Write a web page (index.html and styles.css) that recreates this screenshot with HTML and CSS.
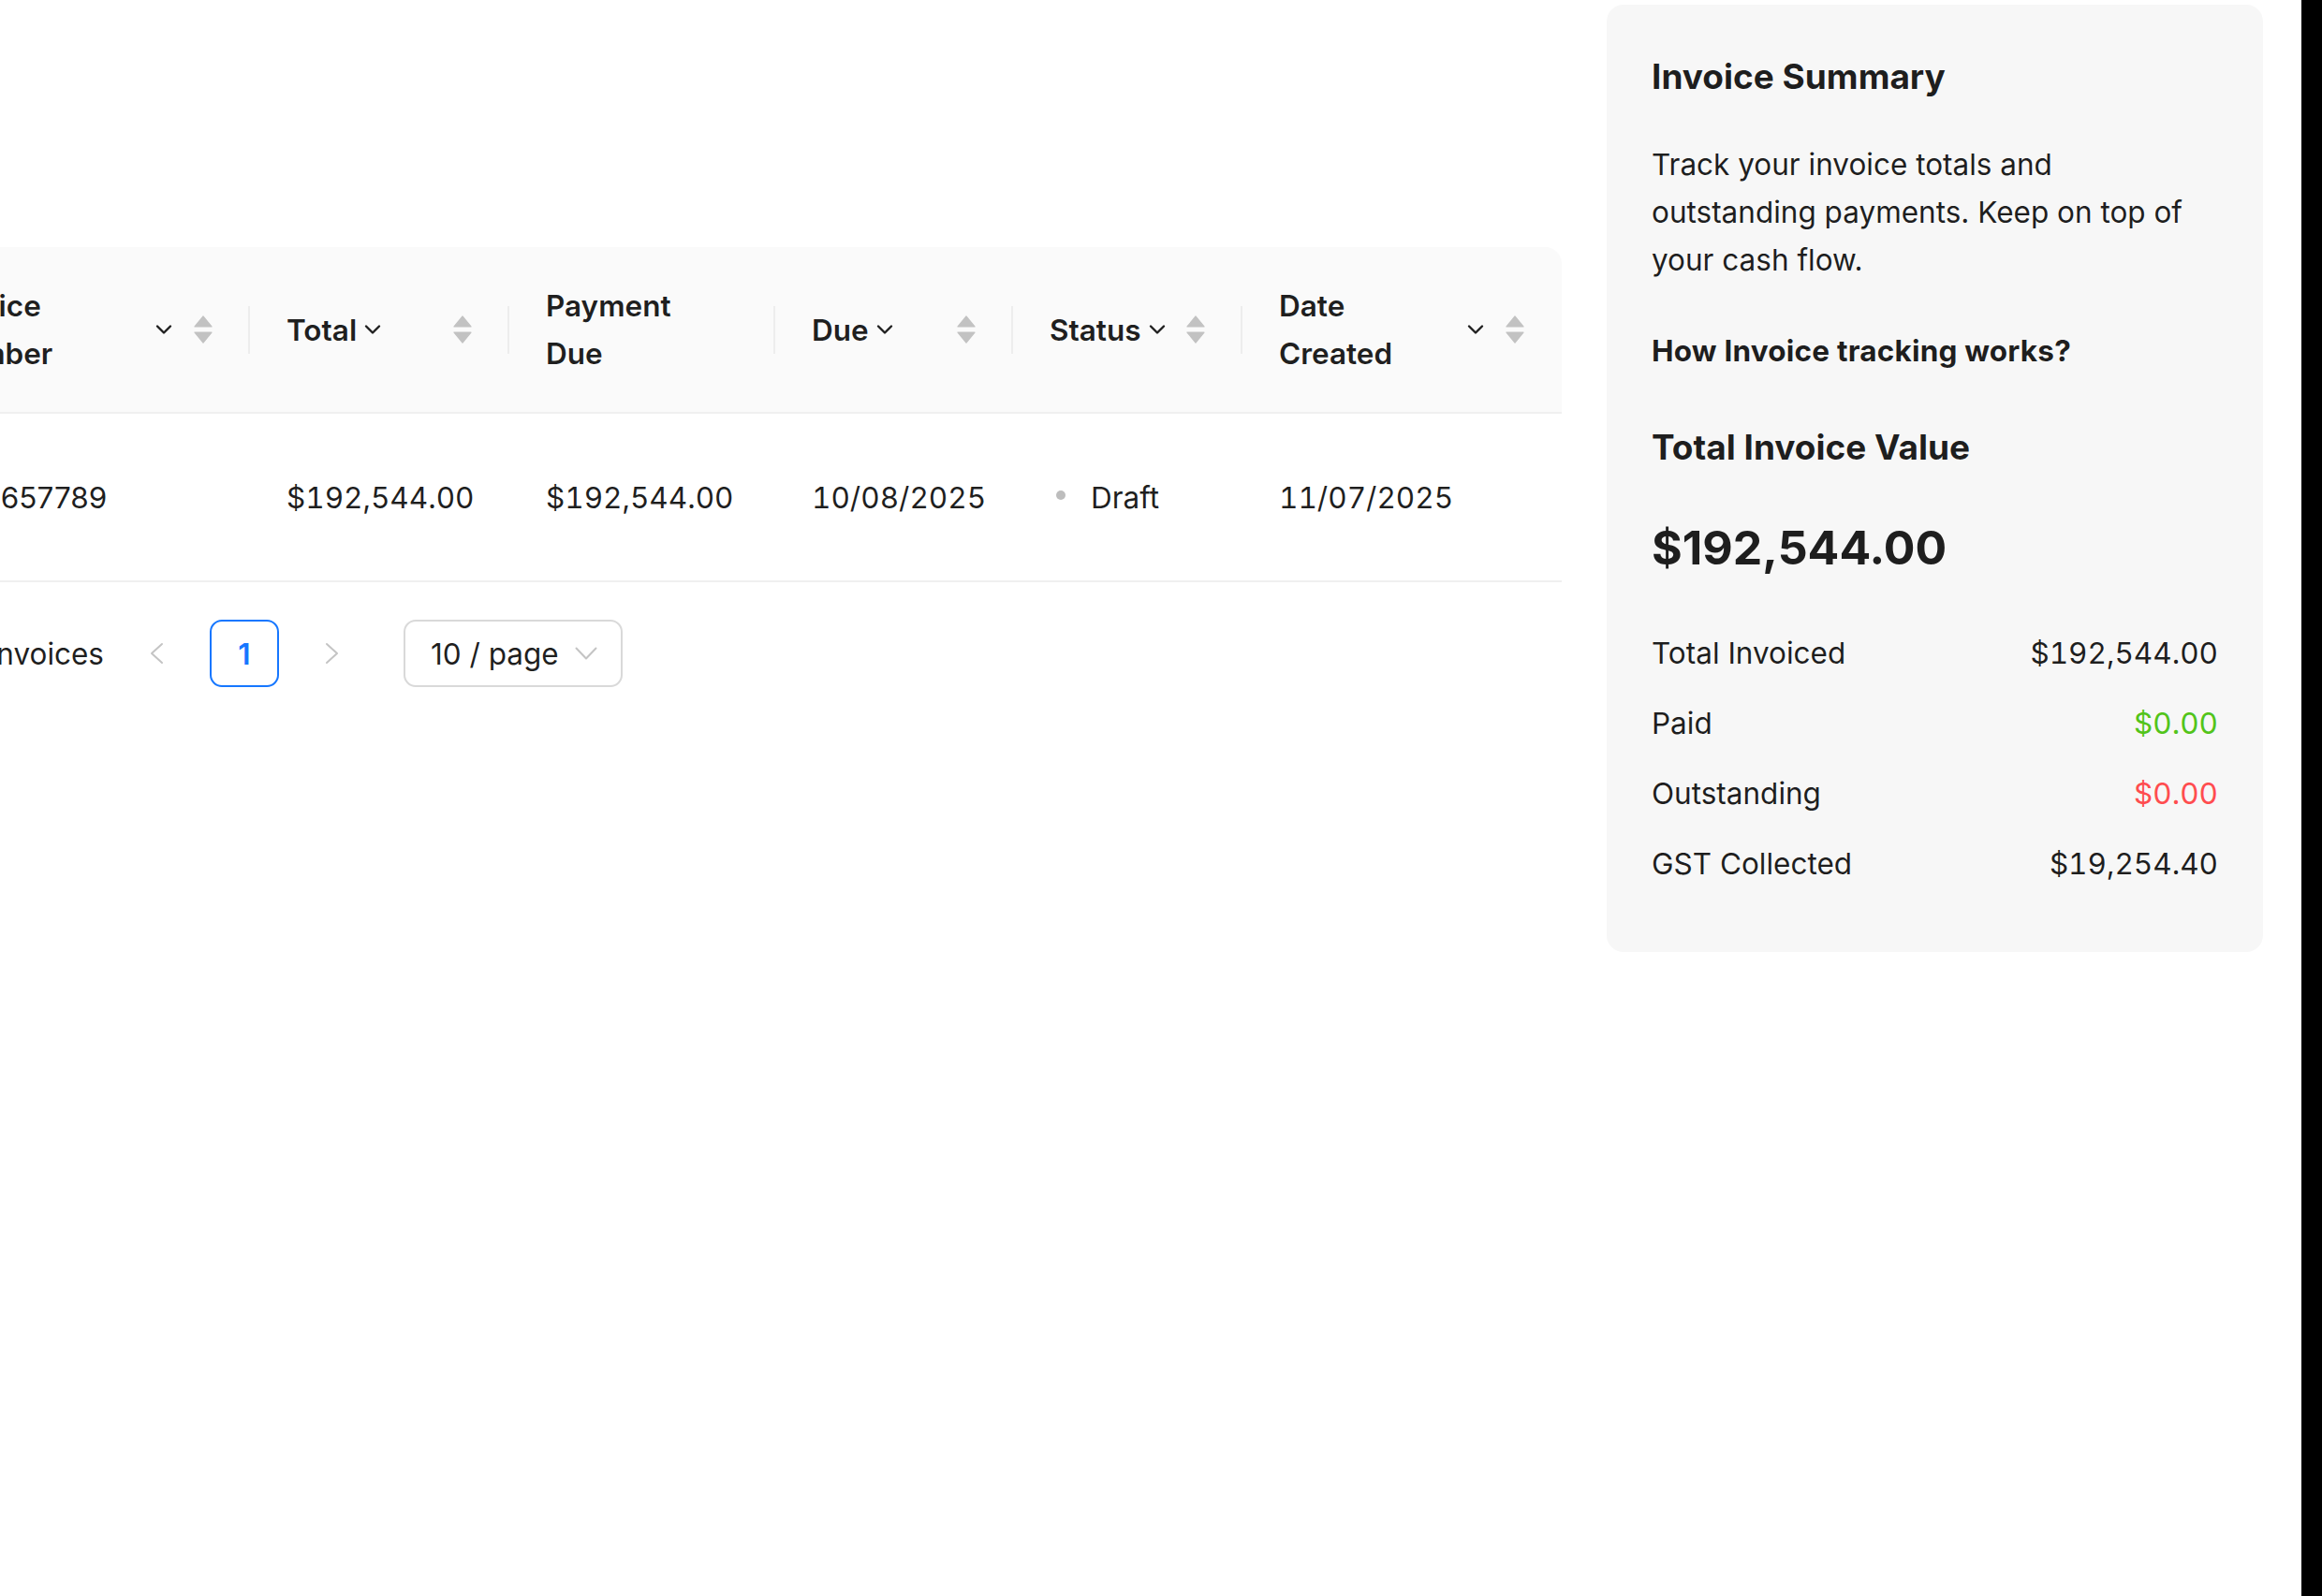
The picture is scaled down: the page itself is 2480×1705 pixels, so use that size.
FILE: index.html
```html
<!DOCTYPE html>
<html lang="en">
<head>
<meta charset="utf-8">
<title>Invoices</title>
<link rel="stylesheet" href="styles.css">
</head>
<body>
<div class="page">
  <main class="main">
    <table class="inv-table">
      <colgroup>
        <col class="c1"><col class="c2"><col class="c3"><col class="c4"><col class="c5"><col class="c6">
      </colgroup>
      <thead>
        <tr>
          <th class="sep">
            <div class="th-inner">
              <span class="th-title grow">Invoice<br>Number</span>
              <svg class="chev wide-gap" viewBox="0 0 20 12" width="20" height="12"><polyline points="3,2.5 10,9.5 17,2.5"/></svg>
              <svg class="sorter" viewBox="0 0 20 30" width="20" height="30"><polygon points="10,1 19,12 1,12"/><polygon points="1,18 19,18 10,29"/></svg>
            </div>
          </th>
          <th class="sep">
            <div class="th-inner">
              <span class="th-title">Total</span>
              <svg class="chev" viewBox="0 0 20 12" width="20" height="12"><polyline points="3,2.5 10,9.5 17,2.5"/></svg>
              <svg class="sorter push" viewBox="0 0 20 30" width="20" height="30"><polygon points="10,1 19,12 1,12"/><polygon points="1,18 19,18 10,29"/></svg>
            </div>
          </th>
          <th class="sep">
            <div class="th-inner">
              <span class="th-title">Payment<br>Due</span>
            </div>
          </th>
          <th class="sep">
            <div class="th-inner">
              <span class="th-title">Due</span>
              <svg class="chev" viewBox="0 0 20 12" width="20" height="12"><polyline points="3,2.5 10,9.5 17,2.5"/></svg>
              <svg class="sorter push" viewBox="0 0 20 30" width="20" height="30"><polygon points="10,1 19,12 1,12"/><polygon points="1,18 19,18 10,29"/></svg>
            </div>
          </th>
          <th class="sep">
            <div class="th-inner">
              <span class="th-title">Status</span>
              <svg class="chev" viewBox="0 0 20 12" width="20" height="12"><polyline points="3,2.5 10,9.5 17,2.5"/></svg>
              <svg class="sorter push" viewBox="0 0 20 30" width="20" height="30"><polygon points="10,1 19,12 1,12"/><polygon points="1,18 19,18 10,29"/></svg>
            </div>
          </th>
          <th class="last">
            <div class="th-inner">
              <span class="th-title grow">Date<br>Created</span>
              <svg class="chev wide-gap" viewBox="0 0 20 12" width="20" height="12"><polyline points="3,2.5 10,9.5 17,2.5"/></svg>
              <svg class="sorter" viewBox="0 0 20 30" width="20" height="30"><polygon points="10,1 19,12 1,12"/><polygon points="1,18 19,18 10,29"/></svg>
            </div>
          </th>
        </tr>
      </thead>
      <tbody>
        <tr>
          <td>INV-657789</td>
          <td class="num">$192,544.00</td>
          <td class="num">$192,544.00</td>
          <td class="num">10/08/2025</td>
          <td><span class="status"><span class="dot"></span>Draft</span></td>
          <td class="num">11/07/2025</td>
        </tr>
      </tbody>
    </table>

    <nav class="pager">
      <span class="pg-total"><span>Total 1 invoices</span></span>
      <span class="pg-btn" aria-label="Previous page">
        <svg viewBox="0 0 16 24" width="16" height="24"><polyline points="14,2 3,12 14,22"/></svg>
      </span>
      <span class="pg-item">1</span>
      <span class="pg-btn" aria-label="Next page">
        <svg viewBox="0 0 16 24" width="16" height="24"><polyline points="2,2 13,12 2,22"/></svg>
      </span>
      <span class="pg-select">
        <span>10 / page</span>
        <svg viewBox="0 0 24 14" width="24" height="14"><polyline points="1.5,1.5 12,12.5 22.5,1.5"/></svg>
      </span>
    </nav>
  </main>

  <aside class="summary">
    <h2 class="sum-title">Invoice Summary</h2>
    <p class="sum-desc">Track your invoice totals and outstanding payments. Keep on top of your cash flow.</p>
    <div class="sum-link">How Invoice tracking works?</div>
    <h3 class="sum-sub">Total Invoice Value</h3>
    <div class="sum-big">$192,544.00</div>
    <div class="sum-rows">
      <div class="sum-row"><span>Total Invoiced</span><span class="num">$192,544.00</span></div>
      <div class="sum-row"><span>Paid</span><span class="num pos">$0.00</span></div>
      <div class="sum-row"><span>Outstanding</span><span class="num neg">$0.00</span></div>
      <div class="sum-row"><span>GST Collected</span><span class="num">$19,254.40</span></div>
    </div>
  </aside>
</div>
</body>
</html>
```

FILE: styles.css
```css
html, body {
  margin: 0;
  padding: 0;
  background: #000;
}

body {
  font-family: Inter, "Noto Sans", "Liberation Sans", sans-serif;
  color: rgba(0, 0, 0, 0.88);
  font-size: 31.5px;
  line-height: 51px;
}

.num {
  font-variant-numeric: tabular-nums;
}

.page {
  width: 2458px;
  min-height: 1705px;
  background: #fff;
  display: flex;
  align-items: flex-start;
  gap: 48px;
  padding: 5px 41px 0 0;
  box-sizing: border-box;
  overflow: hidden;
}

.main {
  flex: none;
  width: 1773px;
  margin-left: -105px;
  padding-top: 259px;
}

/* ---------- table ---------- */
.inv-table {
  width: 1773px;
  table-layout: fixed;
  border-collapse: separate;
  border-spacing: 0;
}

.c1 { width: 372px; }
.c2 { width: 277px; }
.c3 { width: 284px; }
.c4 { width: 254px; }
.c5 { width: 245px; }
.c6 { width: 341px; }

.inv-table th {
  position: relative;
  background: #fafafa;
  font-weight: 600;
  text-align: left;
  padding: 37px 40px 37px 39px;
  border-bottom: 2px solid #f0f0f0;
  vertical-align: middle;
}

.inv-table th.last {
  border-top-right-radius: 18px;
}

.inv-table th.sep::after {
  content: "";
  position: absolute;
  right: 0;
  top: 50%;
  width: 2px;
  height: 51px;
  margin-top: -25px;
  background: #ededed;
}

.th-inner {
  display: flex;
  align-items: center;
  min-height: 102px;
}

.th-title {
  white-space: nowrap;
}

.th-title.grow {
  flex: 1;
}

.chev {
  flex: none;
  margin-left: 7px;
  fill: none;
  stroke: #1f1f1f;
  stroke-width: 2.4;
  stroke-linecap: round;
  stroke-linejoin: round;
}

.chev.wide-gap {
  margin-left: 0;
  margin-right: 22px;
}

.sorter {
  flex: none;
  fill: #c2c2c2;
  stroke: #c2c2c2;
  stroke-width: 1.2;
  stroke-linejoin: round;
}

.sorter.push {
  margin-left: auto;
}

.inv-table td {
  padding: 63.5px 40px 63.5px 39px;
  border-bottom: 2px solid #f0f0f0;
  white-space: nowrap;
  vertical-align: middle;
}

.status .dot {
  display: inline-block;
  width: 10px;
  height: 10px;
  border-radius: 50%;
  background: #bdbdbd;
  margin: 0 27px 0 7px;
  vertical-align: middle;
  position: relative;
  top: -5px;
}

/* ---------- pagination ---------- */
.pager {
  display: flex;
  align-items: center;
  margin-top: 40px;
  height: 72px;
}

.pg-total {
  flex: none;
  width: 216px;
  margin-right: 19px;
  display: flex;
  justify-content: flex-end;
  white-space: nowrap;
}

.pg-total > span {
  flex: none;
}

.pg-btn {
  width: 74px;
  height: 72px;
  display: flex;
  align-items: center;
  justify-content: center;
}

.pg-btn svg,
.pg-select svg {
  fill: none;
  stroke: #c4c4c4;
  stroke-width: 2;
  stroke-linecap: round;
  stroke-linejoin: round;
}

.pg-item {
  width: 74px;
  height: 72px;
  margin: 0 20px;
  box-sizing: border-box;
  border: 2px solid #1677ff;
  border-radius: 13px;
  color: #1677ff;
  font-weight: 600;
  display: flex;
  align-items: center;
  justify-content: center;
}

.pg-select {
  width: 234px;
  height: 72px;
  margin-left: 39px;
  box-sizing: border-box;
  border: 2px solid #d9d9d9;
  border-radius: 13px;
  padding: 0 25px 0 27px;
  display: flex;
  align-items: center;
  justify-content: space-between;
  white-space: nowrap;
}

/* ---------- summary card ---------- */
.summary {
  flex: none;
  width: 701px;
  box-sizing: border-box;
  background: #f7f7f7;
  border-radius: 18px;
  padding: 52px 48px 69px;
}

.sum-title,
.sum-sub {
  margin: 0;
  font-size: 37px;
  line-height: 50px;
  font-weight: 700;
}

.sum-desc {
  margin: 43px 0 0;
  max-width: 590px;
}

.sum-link {
  margin-top: 46px;
  font-weight: 700;
  letter-spacing: 0.2px;
}

.sum-sub {
  margin-top: 53px;
}

.sum-big {
  margin-top: 50px;
  font-size: 50px;
  line-height: 64px;
  font-weight: 700;
}

.sum-rows {
  margin-top: 55px;
  display: flex;
  flex-direction: column;
  gap: 24px;
}

.sum-row {
  display: flex;
  justify-content: space-between;
}

.pos { color: #52c41a; }
.neg { color: #ff4d4f; }
```
